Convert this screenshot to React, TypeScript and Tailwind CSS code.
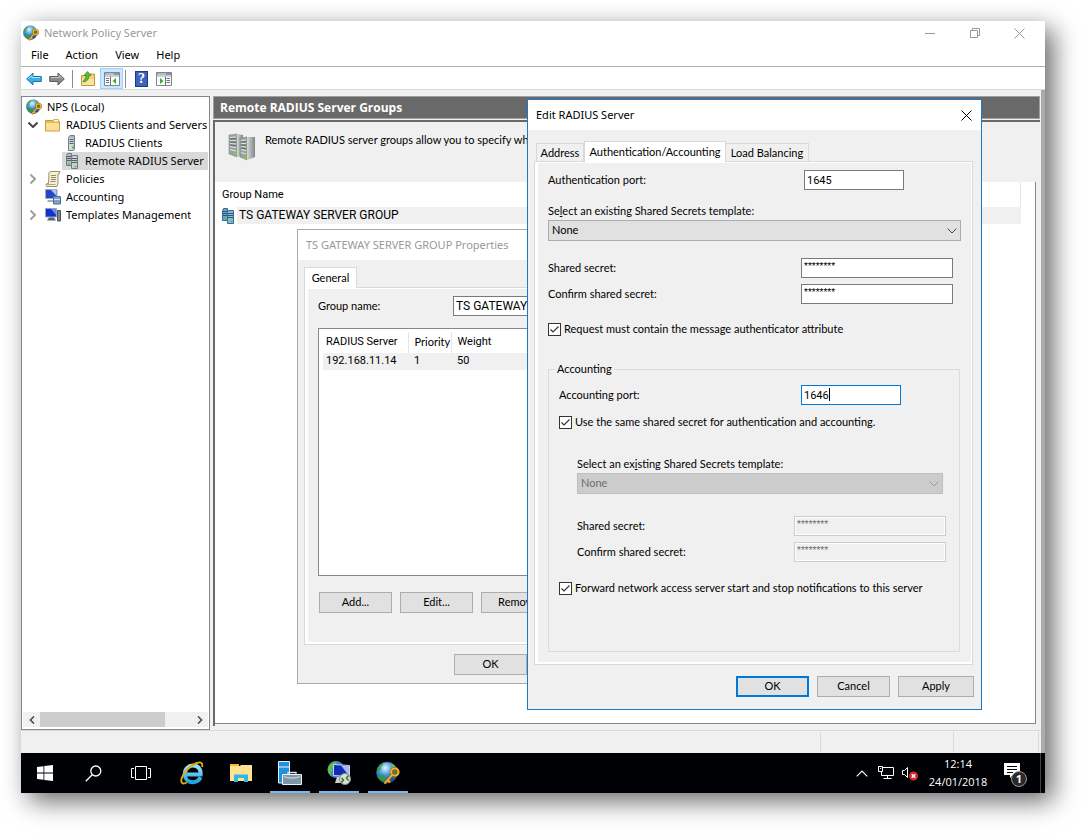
import React, {useState} from "react";
import {clsx} from "clsx";

// --- ICONS ---
const GlobeKeyIcon = ({size = 16}: {size?: number}) => (
  <svg width={size} height={size} viewBox="0 0 24 24" className="shrink-0">
    <defs>
      <radialGradient id="globe" cx="42%" cy="28%" r="75%">
        <stop offset="0" stopColor="#e2f5fe"/>
        <stop offset="0.45" stopColor="#4596dc"/>
        <stop offset="1" stopColor="#123f86"/>
      </radialGradient>
    </defs>
    <circle cx="11" cy="11.500" r="10.500" fill="url(#globe)" stroke="#44617f" strokeWidth="0.600"/>
    <path d="M1.500 8C3 4 5 2.500 7.500 1.800L7 4 4.500 6 5 8.500 3 10.500 1 10.500Z" fill="#3fa63d"/>
    <path d="M14 2C17 3 19.500 5 20.800 8L18 8.500 15.500 7 16 4.500Z" fill="#6cc455"/>
    <path d="M3 15L7 14 10 17 8.500 21C5 20 3 18 2 15.500Z" fill="#2f9a3e"/>
    <circle cx="18.800" cy="11" r="3.500" fill="#3b8d2d" stroke="#8a5a10" strokeWidth="3"/>
    <circle cx="18.800" cy="11" r="3.600" fill="none" stroke="#f4b33d" strokeWidth="1.900"/>
    <path d="M16 14L8.500 22.500M11.500 19L14 21.300" stroke="#8a5a10" strokeWidth="3"/>
    <path d="M16 14L8.500 22.500M11.500 19L14 21.300" stroke="#f4b33d" strokeWidth="1.800"/>
  </svg>
);

const FolderIcon = () => (
  <svg width="16" height="16" viewBox="0 0 16 16" className="shrink-0">
    <path d="M0.500 3.500H7L8.500 4.500H14.500V14H0.500Z" fill="#e6bc5c" stroke="#c99a3c"/>
    <path d="M8.500 2.500H13.500V5H8.500Z" fill="#fff8e0" stroke="#d9b15a"/>
    <path d="M1 6H14V13.500H1Z" fill="#fbdf94"/>
  </svg>
);

const ServerIcon = () => (
  <svg width="16" height="16" viewBox="0 0 16 16" className="shrink-0">
    <path d="M3.500 2.500L5 0.500H9.500V14L8.500 15.500H3.500Z" fill="#aab6bd" stroke="#76838b"/>
    <path d="M4 3H8.500V15H4Z" fill="#d3dadd"/>
    <path d="M4.500 4.500H8.500M4.500 6.500H8.500M4.500 8.500H8.500" stroke="#52636e"/>
    <path d="M7 12.500H9" stroke="#3fc425" strokeWidth="2"/>
  </svg>
);

const ServersIcon = ({blue = false}: {blue?: boolean}) => (
  <svg width="16" height="16" viewBox="0 0 16 16" className="shrink-0">
    <path d="M1.500 2.500L2.500 0.500H6.500V12.500H1.500Z" fill={blue ? "#6fa3c6" : "#b4bdc2"} stroke={blue ? "#376a90" : "#707c84"}/>
    <path d="M2 3.500H6M2 5.500H6M2 7.500H6" stroke={blue ? "#28587c" : "#55626b"}/>
    <path d="M6.500 4.500L7.500 2.500H12.500V15.500H6.500Z" fill={blue ? "#8db8d4" : "#c9d1d5"} stroke={blue ? "#376a90" : "#707c84"}/>
    <path d="M7 5.500H12M7 7.500H12M7 9.500H12" stroke={blue ? "#28587c" : "#55626b"}/>
    <path d="M3 11H5M9.500 13.500H11.500" stroke="#4fc62f" strokeWidth="1.500"/>
  </svg>
);

const RackIcon = () => (
  <svg width="28" height="30" viewBox="0 0 28 30" className="shrink-0">
    <defs>
      <linearGradient id="rack" x1="0" x2="1">
        <stop offset="0" stopColor="#d5d9d8"/>
        <stop offset="1" stopColor="#7f8887"/>
      </linearGradient>
    </defs>
    <path d="M1 3L9 2V25L1 22Z" fill="#9aa2a1" stroke="#8a9190" strokeWidth="0.600"/>
    <path d="M9 2L15 3V24L9 25Z" fill="url(#rack)"/>
    <path d="M2 5.500L8 5M2 8.500L8 8.500M2 11.500L8 12M2 14.500L8 15.500M2 17.500L8 19" stroke="#dfe2e2" strokeWidth="1.200"/>
    <path d="M2 7L8 6.700M2 10L8 10.200M2 13L8 13.700" stroke="#505958" strokeWidth="0.900"/>
    <path d="M12 6L19 5V28L12 25Z" fill="#9aa2a1" stroke="#808887" strokeWidth="0.600"/>
    <path d="M19 5L27 5V25L19 28Z" fill="url(#rack)"/>
    <path d="M13 8.500L18 8M13 11.500L18 11.500M13 14.500L18 15M13 17.500L18 18.500M13 20.500L18 22" stroke="#dfe2e2" strokeWidth="1.200"/>
    <path d="M13 10L18 9.800M13 13L18 13.200M13 16L18 16.700" stroke="#505958" strokeWidth="0.900"/>
    <path d="M6 21.500L8.500 22.200M16 25L18.500 26" stroke="#6ede1b" strokeWidth="2"/>
  </svg>
);

const ScrollIcon = () => (
  <svg width="16" height="16" viewBox="0 0 16 16" className="shrink-0">
    <path d="M4 1.500C4.500 0.700 5 0.500 6 0.500H15L14 3H13V12L12 15.500H1.500C0.500 14.500 1 13 2 12.500H3.500Z" fill="#f6efd2" stroke="#9b9072"/>
    <path d="M6 4.500H11M6 6.500H11M6 8.500H11M5.500 10.500H10.500" stroke="#8f8b6b"/>
    <path d="M2 13.500H10.500" stroke="#b3a67c"/>
  </svg>
);

const AccountingIcon = () => (
  <svg width="16" height="16" viewBox="0 0 16 16" className="shrink-0">
    <path d="M0.500 0.500H12V9.500H0.500Z" fill="#2348c8" stroke="#a3acba"/>
    <path d="M6 1H11.500V7Z" fill="#a9c4f5"/>
    <path d="M3 11H8V13H2Z" fill="#a5adb8"/>
    <path d="M8.500 7.500H15.500V15H8.500Z" fill="#7f9fc6" stroke="#4e6c95"/>
    <path d="M9 10.500H15" stroke="#d2e0f2"/>
  </svg>
);

const TemplatesIcon = () => (
  <svg width="16" height="16" viewBox="0 0 16 16" className="shrink-0">
    <path d="M0.500 1.500H11.500V10H0.500Z" fill="#1432d2" stroke="#9aa3b2"/>
    <path d="M6 2H11V8Z" fill="#6a8cf0"/>
    <path d="M12.500 3.500H15.500V14H12.500Z" fill="#7b858d" stroke="#4c555c"/>
    <path d="M4 10.500H9L11 13.500H2Z" fill="#5b646c"/>
  </svg>
);

const ArrowIcon = ({back = false}: {back?: boolean}) => (
  <svg width="16" height="16" viewBox="0 0 16 16" className={clsx("shrink-0", !back && "-scale-x-100")}>
    <path d="M0.700 8L7 2V5.500H15.300V10.500H7V14Z" fill={back ? "#35b0ee" : "#8b8b8b"} stroke={back ? "#2a6ea8" : "#5b5b5b"}/>
    <path d="M2.500 7.500L6 4.500V6.500H14" fill="none" stroke={back ? "#a5e2fb" : "#c4c4c4"}/>
  </svg>
);

const FolderUpIcon = () => (
  <svg width="16" height="16" viewBox="0 0 16 16">
    <path d="M1.500 4.500H8L9 3H14.500V14.500H1.500Z" fill="#f3d07c" stroke="#bf983f"/>
    <path d="M2 8H14V14H2Z" fill="#fbe2a1"/>
    <path d="M3 10C5 9 6 7 6 4.500H4L7.500 0.500 11 4.500H9C9 8 7 10.500 3.500 11Z" fill="#55c22f" stroke="#2e8a17" strokeWidth="0.700"/>
  </svg>
);

const ConsoleIcon = ({flip = false}: {flip?: boolean}) => (
  <svg width="16" height="14" viewBox="0 0 16 14">
    <path d="M0.500 0.500H15.500V13.500H0.500Z" fill="#fff" stroke="#7d8791"/>
    <path d="M1 1H15V4.500H1Z" fill="#8b959e"/>
    <path d="M1.500 2H10M1 3.800H15" stroke="#e3e7ea"/>
    {flip ? (
      <>
        <path d="M9.500 4.500V13M10.500 6.500H14M10.500 8.500H14M10.500 10.500H14" stroke="#66717c"/>
        <path d="M4 6V12L7.500 9Z" fill="#3fae27"/>
      </>
    ) : (
      <>
        <path d="M6.500 4.500V13M2 6.500H5M2 8.500H5M2 10.500H5" stroke="#66717c"/>
        <path d="M12 6V12L8.500 9Z" fill="#3fae27"/>
      </>
    )}
  </svg>
);

interface ChevronProps {
  className?: string;
  d?: string;
  stroke?: number;
}

const ChevronIcon = ({className, d = "M0.500 0.500L5 5L9.500 0.500", stroke = 1}: ChevronProps) => (
  <svg width="10" height="6" viewBox="0 0 10 6" fill="none" className={className}>
    <path d={d} stroke="currentColor" strokeWidth={stroke}/>
  </svg>
);

const CloseIcon = () => (
  <svg width="11" height="11" viewBox="0 0 11 11" fill="none">
    <path d="M0.500 0.500L10.500 10.500M10.500 0.500L0.500 10.500" stroke="currentColor"/>
  </svg>
);

// --- FORM CONTROLS ---
interface FieldProps {
  id: string;
  label: string;
  value: string;
  secret?: boolean;
  disabled?: boolean;
  focused?: boolean;
  className?: string;
}

const Field = ({id, label, value, secret, disabled, focused, className}: FieldProps) => (
  <div className={clsx("flex h-5 items-center justify-between", className)}>
    <label htmlFor={id}>{label}</label>
    <div className={clsx("relative h-5", secret ? "w-[152px]" : "w-[100px]")}>
      <input
        id={id}
        defaultValue={value}
        disabled={disabled}
        className={clsx(
          "block h-5 w-full border px-0.5 font-[Roboto,sans-serif] outline-none",
          secret ? "pb-1 text-[9px]" : "text-[11px]",
          disabled ? "border-[#cccccc] bg-[#f0f0f0] text-[#6d6d6d] shadow-[inset_0_0_0_1px_#fff]" : "bg-white",
          !disabled && (focused ? "border-[#0078d7]" : "border-[#7a7a7a]")
        )}
      />
      {focused && <span className="absolute left-7 top-[3px] h-[13px] w-px bg-black"/>}
    </div>
  </div>
);

const Dropdown = ({id, label, hotkey, disabled}: {id: string; label: string; hotkey: number; disabled?: boolean}) => (
  <div>
    <label htmlFor={id} className="block h-4 leading-4">
      {label.slice(0, hotkey)}<u>{label[hotkey]}</u>{label.slice(hotkey + 1)}
    </label>
    <div className="relative mt-px">
      <select
        id={id}
        disabled={disabled}
        className={clsx(
          "block h-[21px] w-full appearance-none border pl-[3px] opacity-100 outline-none",
          disabled ? "border-[#bfbfbf] bg-[#cccccc] text-[#6d6d6d]" : "border-[#adadad] bg-[#e1e1e1]"
        )}
      >
        <option>None</option>
      </select>
      <ChevronIcon className={clsx("pointer-events-none absolute right-1 top-2", disabled ? "text-[#999999]" : "text-[#444444]")}/>
    </div>
  </div>
);

const Tick = ({label, className}: {label: string; className?: string}) => {
  const [checked, setChecked] = useState(true);
  return (
    <label className={clsx("flex h-4 items-center gap-[3px] whitespace-nowrap", className)}>
      <span className="relative size-[13px]">
        <input
          type="checkbox"
          checked={checked}
          onChange={(e) => setChecked(e.target.checked)}
          className="block size-[13px] appearance-none border border-[#333333] bg-white"
        />
        {checked && (
          <svg width="13" height="13" viewBox="0 0 13 13" fill="none" className="pointer-events-none absolute inset-0">
            <path d="M2.500 6.500L5 9L10.500 3.500" stroke="#333" strokeWidth="1.200"/>
          </svg>
        )}
      </span>
      {label}
    </label>
  );
};

const PushButton = ({children, primary, wide}: {children: React.ReactNode; primary?: boolean; wide?: boolean}) => (
  <button
    className={clsx(
      "h-[21px] shrink-0 bg-[#e1e1e1] text-center",
      wide ? "w-[76px]" : "w-[73px]",
      primary ? "border-2 border-[#0078d7]" : "border border-[#adadad]"
    )}
  >
    {children}
  </button>
);

// --- TREE ---
interface TreeRowProps {
  icon: React.ReactNode;
  label: string;
  arrow?: "open" | "closed";
  child?: boolean;
  selected?: boolean;
}

const TreeRow = ({icon, label, arrow, child, selected}: TreeRowProps) => (
  <li className={clsx("flex h-[18px]", child ? "pl-[39px]" : "pl-[5px]")}>
    {!child && (
      <span className="flex w-[17px] shrink-0 items-center">
        {arrow === "open" && <ChevronIcon stroke={2} className="text-[#444444]"/>}
        {arrow === "closed" && <ChevronIcon stroke={2} className="-rotate-90 text-[#a0a0a0]"/>}
      </span>
    )}
    <button className={clsx("flex min-w-0 flex-1 items-center whitespace-nowrap", child ? "gap-1 pl-[3px]" : "gap-[5px]", selected && "bg-[#d9d9d9]")}>
      {icon}
      <span className="overflow-hidden">{label}</span>
    </button>
  </li>
);

// --- DIALOGS ---
const GroupDialog = () => (
  <section className="absolute left-[276px] top-[208px] w-[400px] border border-[#aaaaaa] bg-[#f0f0f0] font-[Lato,sans-serif] text-[11px]">
    <h2 className="flex h-[30px] items-center bg-white pl-2 font-['Noto_Sans',sans-serif] text-[11px] text-[#999999]">
      TS GATEWAY SERVER GROUP Properties
    </h2>
    <div className="px-1.5 pt-[7px]">
      <div role="tablist" className="relative -mb-px flex">
        <button role="tab" className="h-[21px] w-[53px] border border-b-0 border-[#d9d9d9] bg-white">General</button>
      </div>
      <div className="border border-[#d9d9d9] bg-white pb-0.5 pl-[3px] pr-px pt-px">
        <div className="bg-[#f0f0f0] px-[10px] pb-[29px] pt-[7px]">
          <div className="flex h-5 items-center">
            <label htmlFor="group-name" className="w-[135px]">Group name:</label>
            <input id="group-name" defaultValue="TS GATEWAY SERVER GROUP" className="h-5 min-w-0 flex-1 border border-[#7a7a7a] bg-white px-0.5 font-[Roboto,sans-serif] text-[12px] outline-none"/>
          </div>
          <div className="mt-3 h-[248px] border border-[#828790] bg-white pl-1 pt-[3px]">
            <table className="w-full table-fixed text-left font-[Roboto,sans-serif]">
              <thead>
                <tr className="h-[21px]">
                  <th className="w-[85px] border-r border-[#e5e5e5] pl-[3px] font-normal">RADIUS Server</th>
                  <th className="w-[43px] border-r border-[#e5e5e5] pl-[6px] font-[Lato,sans-serif] font-normal">Priority</th>
                  <th className="pl-[6px] font-normal">Weight</th>
                </tr>
              </thead>
              <tbody>
                <tr className="h-[17px] bg-[#f0f0f0]">
                  <td className="pl-[3px]">192.168.11.14</td>
                  <td className="pl-[6px]">1</td>
                  <td className="pl-[6px]">50</td>
                </tr>
              </tbody>
            </table>
          </div>
          <div className="mt-4 flex gap-2 pl-px">
            <PushButton>Add...</PushButton>
            <PushButton>Edit...</PushButton>
            <PushButton>Remove</PushButton>
          </div>
        </div>
      </div>
    </div>
    <div className="flex justify-end gap-2 px-[7px] pb-2 pt-[9px]">
      <PushButton>OK</PushButton>
      <PushButton>Cancel</PushButton>
      <PushButton>Apply</PushButton>
    </div>
  </section>
);

const ServerDialog = () => (
  <section className="absolute left-[506px] top-[78px] w-[455px] border border-[#1979ca] bg-[#f0f0f0] font-[Lato,sans-serif] text-[11px]">
    <div className="flex h-[30px] items-center justify-between bg-white pl-2 pr-[9px] font-['Noto_Sans',sans-serif] text-[11px]">
      <h2>Edit RADIUS Server</h2>
      <button aria-label="Close"><CloseIcon/></button>
    </div>
    <div className="pl-1.5 pr-2 pt-[11px]">
      <div role="tablist" className="relative -mb-px flex items-end pl-0.5">
        <button role="tab" className="mb-px h-[18px] w-12 border border-b-0 border-[#d9d9d9] pt-px">Address</button>
        <button role="tab" aria-selected="true" className="h-[21px] w-[142px] border border-b-0 border-[#d9d9d9] bg-white">Authentication/Accounting</button>
        <button role="tab" className="mb-px h-[18px] w-[83px] border border-b-0 border-l-0 border-[#d9d9d9] pt-px">Load Balancing</button>
      </div>
      <div className="border border-[#d9d9d9] bg-white pb-0.5 pl-[3px] pr-px pt-px">
        <div className="bg-[#f0f0f0] px-[10px] pb-[10px] pt-[7px]">
          <Field id="auth-port" label="Authentication port:" value="1645" className="mb-[13px] mr-[57px]"/>
          <Dropdown id="auth-template" label="Select an existing Shared Secrets template:" hotkey={2}/>
          <Field id="auth-secret" label="Shared secret:" value="********" secret className="mb-1.5 mr-2 mt-[17px]"/>
          <Field id="auth-confirm" label="Confirm shared secret:" value="********" secret className="mr-2"/>
          <Tick label="Request must contain the message authenticator attribute" className="mt-[17px]"/>
          <fieldset className="mr-px mt-6 border border-[#dcdcdc] pb-[55px] pl-[10px] pr-4">
            <legend className="-ml-1 h-4 px-0.5 leading-4">Accounting</legend>
            <Field id="acc-port" label="Accounting port:" value="1646" focused className="mr-[42px] mt-2"/>
            <Tick label="Use the same shared secret for authentication and accounting." className="mb-[26px] mt-[9px]"/>
            <div className="pl-[18px]">
              <Dropdown id="acc-template" label="Select an existing Shared Secrets template:" hotkey={12} disabled/>
              <Field id="acc-secret" label="Shared secret:" value="********" secret disabled className="-mr-[3px] mb-1.5 mt-[22px]"/>
              <Field id="acc-confirm" label="Confirm shared secret:" value="********" secret disabled className="-mr-[3px]"/>
            </div>
            <Tick label="Forward network access server start and stop notifications to this server" className="mt-[18px]"/>
          </fieldset>
        </div>
      </div>
    </div>
    <div className="flex justify-end gap-2 pb-3 pr-[7px] pt-[11px]">
      <PushButton primary>OK</PushButton>
      <PushButton>Cancel</PushButton>
      <PushButton wide>Apply</PushButton>
    </div>
  </section>
);

// --- TASKBAR ---
const TaskButton = ({label, open, children}: {label: string; open?: boolean; children: React.ReactNode}) => (
  <button aria-label={label} className="relative flex h-10 w-12 items-center justify-center">
    {children}
    {open && <span className="absolute inset-x-1 bottom-0 h-0.5 bg-[#76b9ed]"/>}
  </button>
);

const Taskbar = () => (
  <footer className="flex h-10 shrink-0 items-center justify-between bg-[#000104] text-white">
    <div className="flex">
      <TaskButton label="Start">
        <svg width="16" height="16" viewBox="0 0 16 16" fill="#fff">
          <path d="M0 2L6.500 1.200V7.500H0ZM7.300 1L16 0V7.500H7.300ZM0 8.400H6.500V14.800L0 14ZM7.300 8.400H16V16L7.300 15Z"/>
        </svg>
      </TaskButton>
      <TaskButton label="Search">
        <svg width="17" height="17" viewBox="0 0 17 17" fill="none" stroke="#fff" strokeWidth="1.300">
          <circle cx="10.800" cy="6" r="5"/>
          <path d="M7.200 9.700L0.800 16.200"/>
        </svg>
      </TaskButton>
      <TaskButton label="Task View">
        <svg width="20" height="14" viewBox="0 0 20 14" fill="none" stroke="#fff">
          <path d="M4.500 0.500H15.500V13.500H4.500ZM3 2.500H0.500V11.500H3M17 2.500H19.500V11.500H17"/>
        </svg>
      </TaskButton>
    </div>
    <div className="ml-[3px] flex flex-1 gap-px">
      <TaskButton label="Internet Explorer">
        <svg width="24" height="24" viewBox="0 0 24 24" fill="none">
          <defs>
            <linearGradient id="ie" x2="0" y2="1">
              <stop stopColor="#9be5fc"/>
              <stop offset="1" stopColor="#249fe0"/>
            </linearGradient>
          </defs>
          <path d="M20.500 16.300C19 19.700 16 21.200 12.800 21.200C7.800 21.200 4.800 17.500 4.800 13C4.800 8 8.500 4.600 13 4.600C18 4.600 21 8.200 20.700 13.500H7" stroke="url(#ie)" strokeWidth="4"/>
          <path d="M22 6C23 2 21 0.500 17 2C10 4.500 3 12 1.500 18C0.500 22.500 3 23.500 7 21.500" stroke="#e2a90f" strokeWidth="1.900"/>
        </svg>
      </TaskButton>
      <TaskButton label="File Explorer">
        <svg width="22" height="20" viewBox="0 0 22 20">
          <path d="M0 1H9V4H0Z" fill="#f5b92f"/>
          <path d="M0 3H10L11 2H22V18H0Z" fill="#ffe391"/>
          <path d="M4 19V11.500H18V19H14V15H8V19Z" fill="#35b4ea"/>
        </svg>
      </TaskButton>
      <TaskButton label="Server Manager" open>
        <svg width="24" height="24" viewBox="0 0 24 24">
          <path d="M0.500 0.500H11.500V22H0.500Z" fill="#2091dd" stroke="#e8f4fc"/>
          <path d="M0.500 6H11.500" stroke="#e8f4fc"/>
          <path d="M10 14V11.500H18V14" fill="none" stroke="#dbe5ea" strokeWidth="1.300"/>
          <path d="M4.500 13.500H23.500V23.500H4.500Z" fill="#7f98a8" stroke="#eef4f7"/>
          <path d="M6 15.500C9 17.500 19 17.500 22 15.500" fill="none" stroke="#dbe5ea"/>
        </svg>
      </TaskButton>
      <TaskButton label="Remote Desktop" open>
        <svg width="24" height="24" viewBox="0 0 24 24">
          <circle cx="9" cy="8.500" r="8.500" fill="#3e86c4"/>
          <path d="M1 7C3 2 7 0 10 0.500L8 4 5 8 4 14C1 12 0.500 10 1 7Z" fill="#5cc048"/>
          <path d="M6.500 3.500L22.500 4.500V15.500L6.500 14.500Z" fill="#1229bb" stroke="#c9d5e4"/>
          <path d="M14 4.500L22 5V15Z" fill="#a9b8ef"/>
          <path d="M10 16L8 22H16L15 16Z" fill="#cfd1ce"/>
          <circle cx="18" cy="18" r="5.500" fill="#d9ded7" stroke="#8b918c"/>
          <path d="M14.500 17L16.500 19L14.500 21.500M21.500 14.500L19.500 17L21.500 19.500" fill="none" stroke="#237d29" strokeWidth="1.500"/>
        </svg>
      </TaskButton>
      <TaskButton label="Network Policy Server" open>
        <GlobeKeyIcon size={24}/>
      </TaskButton>
    </div>
    <div className="mr-1 flex h-10 items-center border-r border-[#444444] pr-3">
      <button aria-label="Show hidden icons">
        <ChevronIcon className="mr-2.5 h-[7px] w-3" d="M0.500 5.500L5 1L9.500 5.500"/>
      </button>
      <svg width="16" height="14" viewBox="0 0 16 14" fill="none" stroke="#fff" className="mr-2">
        <path d="M5 1.500H15.500V9.500H3.500V6M9.500 9.500V12.500M5.500 12.500H13.500M0.500 0.500H4.500V5.500H0.500ZM2 2.500H3"/>
      </svg>
      <svg width="16" height="15" viewBox="0 0 16 15" fill="none" className="mr-2.5">
        <path d="M0.500 4.500H2.500L5.500 1.500V11.500L2.500 8.500H0.500Z" stroke="#fff"/>
        <circle cx="11.500" cy="10" r="4.500" fill="#d8282d"/>
        <path d="M9.700 8.200L13.300 11.800M13.300 8.200L9.700 11.800" stroke="#fff" strokeWidth="1.300"/>
      </svg>
      <div className="w-[60px] text-center font-['Open_Sans',sans-serif] text-[11px] leading-[18px]">
        <div>12:14</div>
        <div>24/01/2018</div>
      </div>
      <button aria-label="Notifications" className="relative ml-4 h-6 w-6">
        <svg width="16" height="16" viewBox="0 0 16 16" className="absolute left-0 top-0.5">
          <path d="M0 0H16V12H9L6 15V12H0Z" fill="#fff"/>
          <path d="M3 3.500H13M3 6.500H13M3 9.500H9" stroke="#000104"/>
        </svg>
        <span className="absolute left-[7px] top-2.5 flex size-4 items-center justify-center rounded-full border border-[#999999] bg-[#2a2a2a] font-['Open_Sans',sans-serif] text-[11px] font-bold">1</span>
      </button>
    </div>
  </footer>
);

const App = () => (
  <div className="flex min-h-screen bg-white pb-[42px] pl-[21px] pr-[42px] pt-[21px] font-['Noto_Sans',sans-serif] text-[11px] text-black">
    <div className="relative flex min-w-0 flex-1 flex-col shadow-[8px_8px_24px_rgba(0,0,0,0.6)]">
      <header className="bg-white">
        <div className="flex h-6 items-center gap-[5px] pl-0.5 text-[#999999]">
          <GlobeKeyIcon/>
          <h1 className="flex-1">Network Policy Server</h1>
          <div className="mr-[3px] flex items-center">
            <button aria-label="Minimize" className="flex w-[45px] justify-center">
              <span className="h-px w-[10px] bg-[#999999]"/>
            </button>
            <button aria-label="Restore" className="flex w-[45px] justify-center">
              <svg width="10" height="10" viewBox="0 0 10 10" fill="none" stroke="currentColor">
                <path d="M0.500 2.500H7.500V9.500H0.500ZM2.500 2.500V0.500H9.500V7.500H7.500"/>
              </svg>
            </button>
            <button aria-label="Close" className="flex w-[45px] justify-center"><CloseIcon/></button>
          </div>
        </div>
        <nav className="flex h-[21px] items-center gap-[17px] pl-[10px]">
          <button>File</button>
          <button>Action</button>
          <button>View</button>
          <button>Help</button>
        </nav>
        <div className="flex h-6 items-center border-y border-b-[#d9d9d9] border-t-[#b0b0b0] pl-[5px] pt-px">
          <button aria-label="Back"><ArrowIcon back/></button>
          <button aria-label="Forward" className="ml-[7px]"><ArrowIcon/></button>
          <span className="mx-[7px] h-[18px] w-px bg-[#8c8c8c]"/>
          <button aria-label="Up" className="mr-1"><FolderUpIcon/></button>
          <button aria-label="Show console tree" className="flex h-[21px] w-[23px] items-center justify-center border border-[#99d1ff] bg-[#cce8ff]">
            <ConsoleIcon/>
          </button>
          <span className="ml-0.5 mr-[9px] h-[18px] w-px bg-[#8c8c8c]"/>
          <button aria-label="Help" className="mr-2 h-4 w-[13px] border border-[#1f3a85] bg-[#3f62bd] font-['Liberation_Serif',serif] text-[14px] font-bold leading-[14px] text-white">?</button>
          <button aria-label="Show action pane"><ConsoleIcon flip/></button>
        </div>
      </header>

      <div className="flex flex-1 border-r-4 border-[#ababab] bg-[#f0f0f0]">
        <div className="flex min-w-0 flex-1 flex-col pt-1.5">
          <div className="flex flex-1">
            <aside className="flex w-[189px] shrink-0 flex-col border border-[#828790] bg-white px-px pb-0.5 pt-px">
              <ul className="flex-1">
                <li className="h-[18px]">
                  <button className="flex h-[18px] items-center gap-[5px] pl-[3px]"><GlobeKeyIcon/>NPS (Local)</button>
                </li>
                <TreeRow arrow="open" icon={<FolderIcon/>} label="RADIUS Clients and Servers"/>
                <TreeRow child icon={<ServerIcon/>} label="RADIUS Clients"/>
                <TreeRow child selected icon={<ServersIcon/>} label="Remote RADIUS Server"/>
                <TreeRow arrow="closed" icon={<ScrollIcon/>} label="Policies"/>
                <TreeRow icon={<AccountingIcon/>} label="Accounting"/>
                <TreeRow arrow="closed" icon={<TemplatesIcon/>} label="Templates Management"/>
              </ul>
              <div className="flex h-[15px] items-center bg-[#f0f0f0] text-[#505050]">
                <button aria-label="Scroll left" className="flex w-[17px] justify-center"><ChevronIcon stroke={2} className="w-2 rotate-90"/></button>
                <div className="h-full w-[125px] bg-[#cdcdcd]"/>
                <div className="flex-1"/>
                <button aria-label="Scroll right" className="flex w-[17px] justify-center"><ChevronIcon stroke={2} className="w-2 -rotate-90"/></button>
              </div>
            </aside>

            <main className="ml-[3px] mr-px flex min-w-0 flex-1 flex-col">
              <h2 className="flex h-[23px] items-center border border-[#a0a0a0] bg-[#696969] pl-1.5 font-['Open_Sans',sans-serif] text-[12px] font-bold text-white">
                Remote RADIUS Server Groups
              </h2>
              <div className="mb-1 mt-px flex flex-1 flex-col border-l-2 border-t-2 border-[#696969] pb-0.5 pr-1">
                <div className="flex h-[60px] gap-[9px] overflow-hidden whitespace-nowrap pl-[13px] pt-[10px] font-[Lato,sans-serif]">
                  <RackIcon/>
                  <p>Remote RADIUS server groups allow you to specify where</p>
                </div>
                <div className="flex-1 border-b border-r border-[#828790] bg-white pr-[14px]">
                  <table className="w-full text-left font-[Roboto,sans-serif]">
                    <thead>
                      <tr className="h-[25px]">
                        <th className="border-r border-[#e5e5e5] pl-[7px] pt-0.5 font-normal">Group Name</th>
                      </tr>
                    </thead>
                    <tbody>
                      <tr className="h-[17px]">
                        <td className="pl-1.5">
                          <div className="flex h-[17px] items-center">
                            <ServersIcon blue/>
                            <span className="flex-1 bg-[#f0f0f0] pl-0.5 text-[12px] leading-[17px]">TS GATEWAY SERVER GROUP</span>
                          </div>
                        </td>
                      </tr>
                    </tbody>
                  </table>
                </div>
              </div>
            </main>
          </div>
          <div className="flex h-[23px] justify-end border-t border-[#d9d9d9] py-px">
            <div className="w-[133px] border-l border-[#d9d9d9]"/>
            <div className="mr-0.5 w-[86px] border-x border-[#d9d9d9]"/>
          </div>
        </div>
      </div>

      <Taskbar/>
      <GroupDialog/>
      <ServerDialog/>
    </div>
  </div>
);

export default App;
